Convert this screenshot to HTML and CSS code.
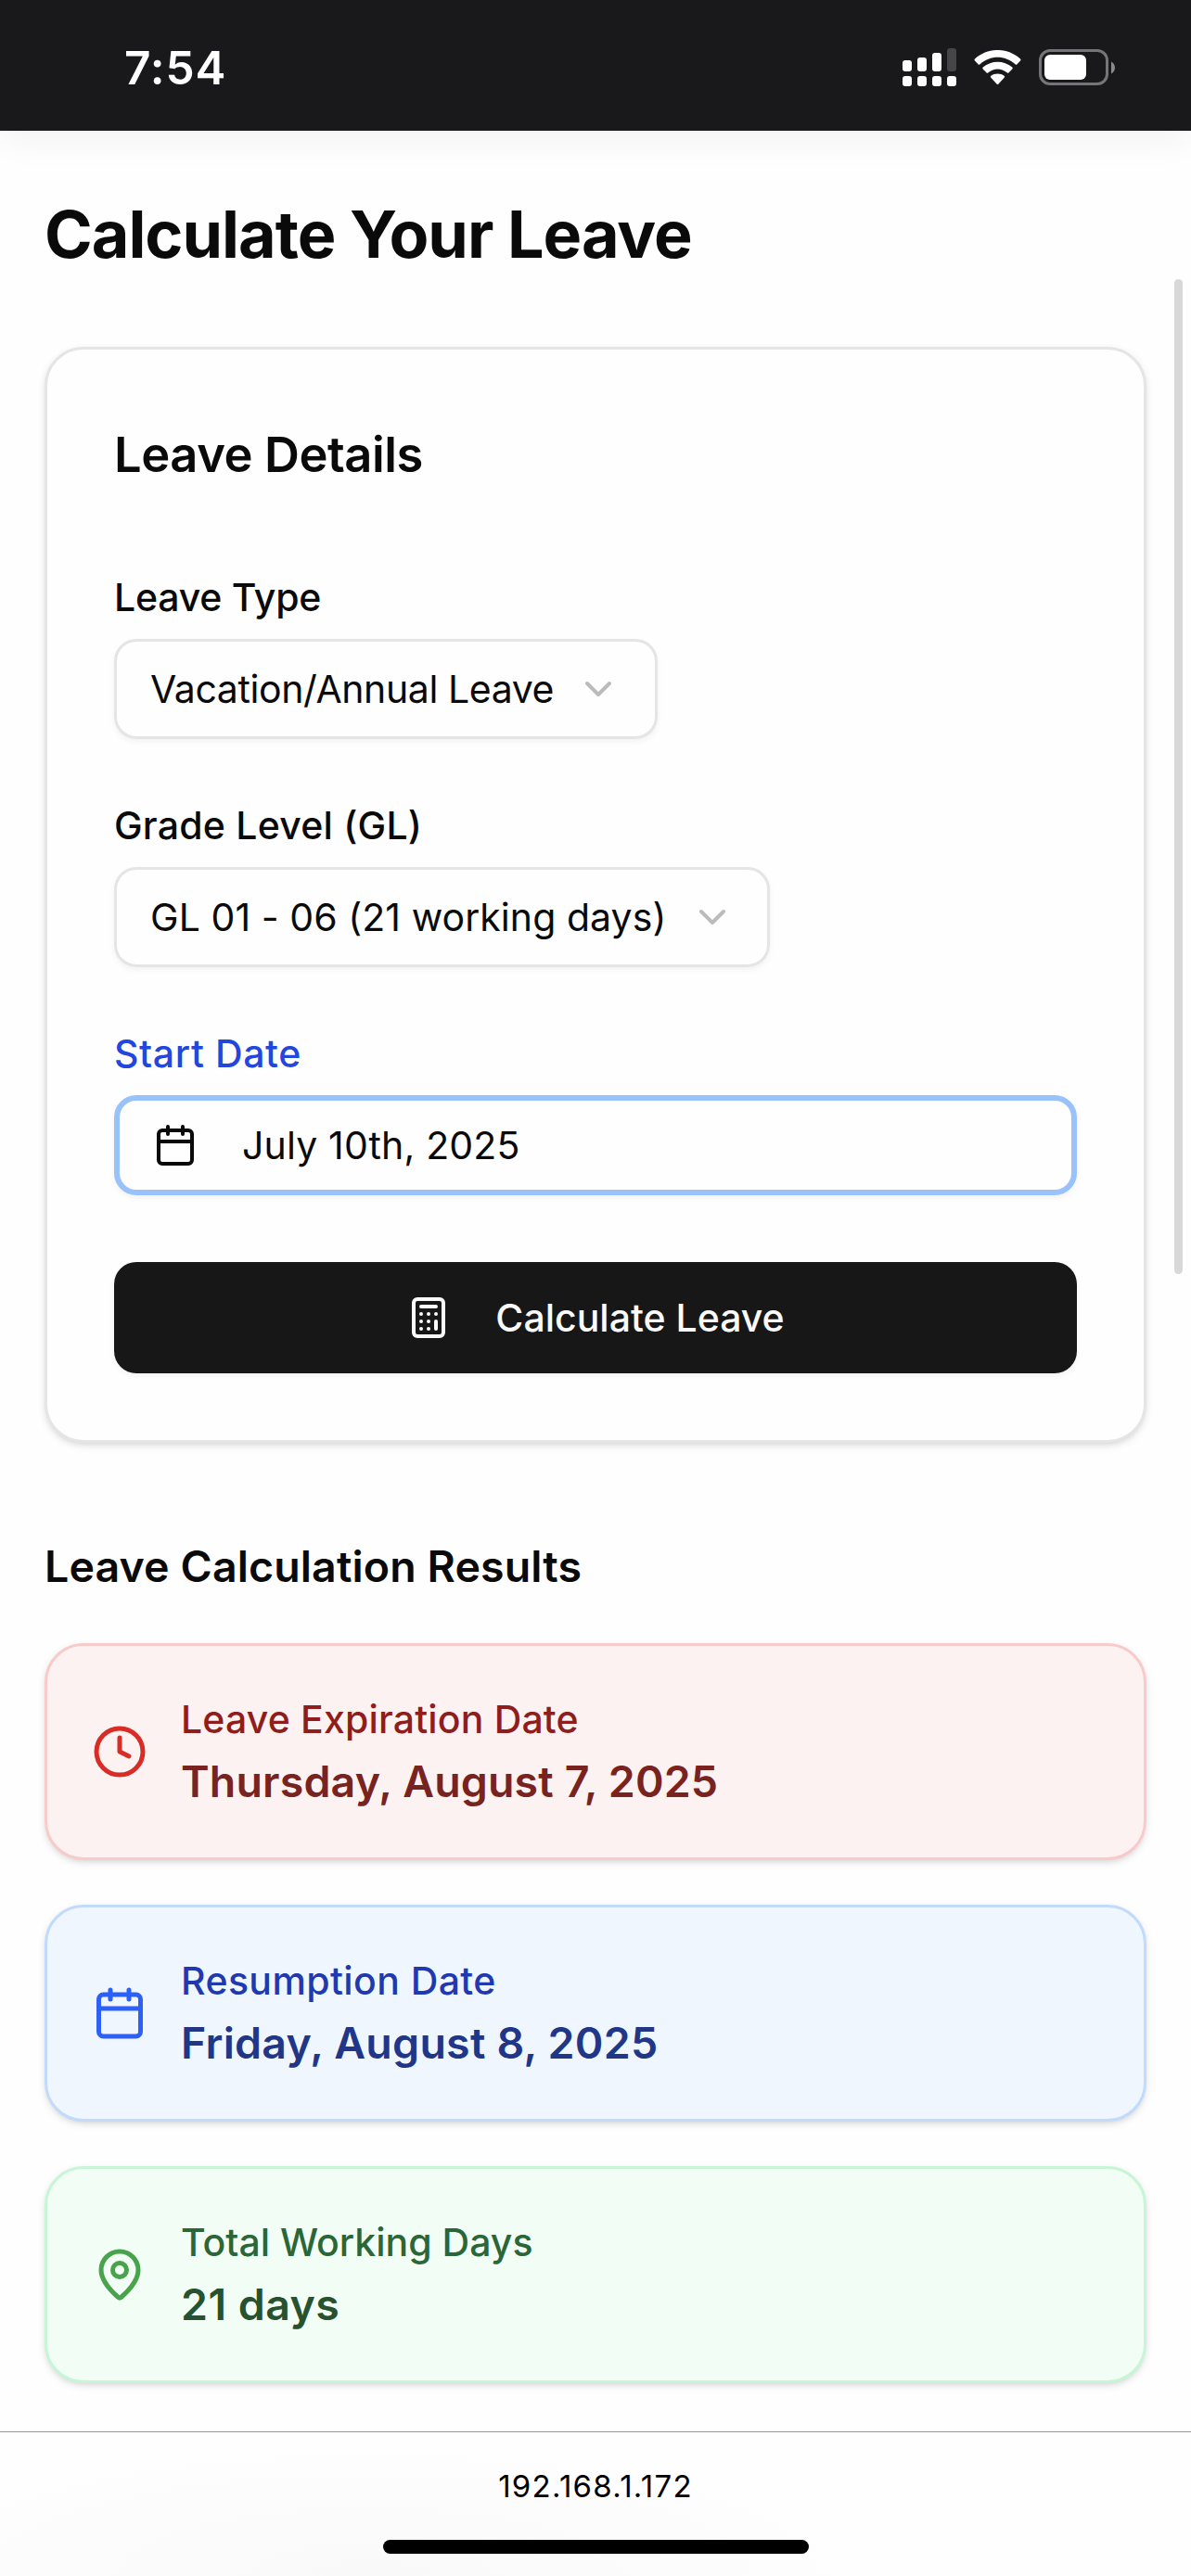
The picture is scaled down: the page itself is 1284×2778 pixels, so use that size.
FILE: index.html
```html
<!DOCTYPE html>
<html lang="en">
<head>
<meta charset="utf-8">
<title>Calculate Your Leave</title>
<link rel="stylesheet" href="styles.css">
</head>
<body>
<div class="screen">
  <header class="status">
    <span class="clock">7:54</span>
    <div class="indicators">
      <svg class="signal" width="58" height="41" viewBox="0 0 58 41" fill="#fff">
        <rect x="0" y="13" width="10" height="12" rx="3"/><rect x="16" y="10" width="10" height="15" rx="3"/><rect x="32" y="5" width="10" height="20" rx="3"/><rect x="48" y="0" width="10" height="25" rx="3" fill="#464648"/>
        <rect x="0" y="30" width="10" height="11" rx="3"/><rect x="16" y="30" width="10" height="11" rx="3"/><rect x="32" y="30" width="10" height="11" rx="3"/><rect x="48" y="30" width="10" height="11" rx="3"/>
      </svg>
      <svg class="wifi" width="51" height="38" viewBox="0 0 51 38" fill="#fff">
        <path d="M1 9.5Q0 10.500 1 11.500L4.500 15.200Q5.500 16.200 6.500 15.200C17.500 5.200 33.500 5.200 44.500 15.200Q45.500 16.200 46.500 15.200L50 11.500Q51 10.500 50 9.500C36 -3.200 15 -3.200 1 9.500Z"/>
        <path d="M9.700 18.500Q8.700 19.500 9.700 20.500L13.400 24.300Q14.400 25.300 15.400 24.300C21.500 19.200 29.500 19.200 35.600 24.300Q36.600 25.300 37.600 24.300L41.300 20.500Q42.300 19.500 41.300 18.500C32 10.700 19 10.700 9.700 18.500Z"/>
        <path d="M18.300 27.700Q17.300 28.700 18.300 29.700L24.500 36.600Q25.500 37.600 26.500 36.600L32.700 29.700Q33.700 28.700 32.700 27.700C28.500 24.700 22.500 24.700 18.300 27.700Z"/>
      </svg>
      <svg class="battery" width="82" height="39" viewBox="0 0 82 39">
        <rect x="1.500" y="1.500" width="72" height="36" rx="10.500" fill="none" stroke="#757577" stroke-width="3"/>
        <rect x="6" y="6" width="45" height="27" rx="6" fill="#fff"/>
        <path d="M78 13.500C83.300 16 83.300 24 78 26.500Z" fill="#8a8a8c"/>
      </svg>
    </div>
  </header>

  <main class="page">
    <h1 class="title">Calculate Your Leave</h1>

    <section class="card">
      <h2 class="card-title">Leave Details</h2>
      <div class="fields">
        <div class="field">
          <label class="label label-type">Leave Type</label>
          <div class="select select-type">
            <span class="type-text">Vacation/Annual Leave</span>
            <svg class="icon chevron" viewBox="0 0 24 24"><path d="m6 9 6 6 6-6"/></svg>
          </div>
        </div>
        <div class="field">
          <label class="label label-grade">Grade Level (GL)</label>
          <div class="select select-grade">
            <span class="grade-text">GL 01 - 06 (21 working days)</span>
            <svg class="icon chevron" viewBox="0 0 24 24"><path d="m6 9 6 6 6-6"/></svg>
          </div>
        </div>
        <div class="field">
          <label class="label label-date">Start Date</label>
          <div class="date">
            <svg class="icon" viewBox="0 0 24 24"><path d="M8 2v4M16 2v4M3 10h18"/><rect x="3" y="4" width="18" height="18" rx="2"/></svg>
            <span class="date-text">July 10th, 2025</span>
          </div>
        </div>
        <button class="submit" type="button">
          <svg class="icon" viewBox="0 0 24 24"><rect x="4" y="2" width="16" height="20" rx="2"/><path d="M8 6h8M16 14v4M16 10h.01M12 10h.01M8 10h.01M12 14h.01M8 14h.01M12 18h.01M8 18h.01"/></svg>
          <span>Calculate Leave</span>
        </button>
      </div>
    </section>

    <h2 class="results-title">Leave Calculation Results</h2>
    <div class="results">
      <article class="result red">
        <svg class="icon large" viewBox="0 0 24 24"><circle cx="12" cy="12" r="10"/><path d="M12 6v6l4 2"/></svg>
        <div><p class="name name-expiry">Leave Expiration Date</p><p class="value">Thursday, August 7, 2025</p></div>
      </article>
      <article class="result blue">
        <svg class="icon large" viewBox="0 0 24 24"><path d="M8 2v4M16 2v4M3 10h18"/><rect x="3" y="4" width="18" height="18" rx="2"/></svg>
        <div><p class="name name-resume">Resumption Date</p><p class="value value-resume">Friday, August 8, 2025</p></div>
      </article>
      <article class="result green">
        <svg class="icon large" viewBox="0 0 24 24"><path d="M20 10c0 4.993-5.539 10.193-7.399 11.799a1 1 0 0 1-1.202 0C9.539 20.193 4 14.993 4 10a8 8 0 0 1 16 0"/><circle cx="12" cy="10" r="3"/></svg>
        <div><p class="name name-total">Total Working Days</p><p class="value value-total">21 days</p></div>
      </article>
    </div>
  </main>

  <footer class="toolbar">
    <span class="address">192.168.1.172</span>
    <div class="home"></div>
  </footer>
  <div class="scrollbar"></div>
</div>
</body>
</html>
```
FILE: styles.css
```css
* { box-sizing: border-box; }
body { margin: 0; background: #fefefe; font-family: Inter, "Liberation Sans", sans-serif; color: #0a0a0a; }
h1, h2, p { margin: 0; }
.screen { position: relative; display: flex; flex-direction: column; width: 1284px; height: 2778px; overflow: hidden; }

.status { flex: none; display: flex; justify-content: space-between; align-items: flex-start; height: 141px; padding: 52px 82px 0 134px; background: #19191b; color: #fff; box-shadow: 0 6px 40px rgba(0, 0, 0, .06); }
.clock { font-size: 49.5px; font-weight: 600; line-height: 42px; letter-spacing: .9px; }
.indicators { display: flex; align-items: flex-start; }
.signal { margin-right: 19px; }
.wifi { margin: 1.500px 19px 0 0; }
.battery { margin-top: 1px; }

.page { flex: none; height: 2481px; padding: 67px 48px 0; }
.title { font-size: 70px; font-weight: 700; line-height: 90px; letter-spacing: -1.01px; }
.card { margin-top: 76px; padding: 72px; height: 1182px; border: 3px solid #e5e5e5; border-radius: 42px; background: #fefefe; box-shadow: 0 3px 9px rgba(0, 0, 0, .1), 0 3px 6px -3px rgba(0, 0, 0, .1); }
.card-title { font-size: 52.5px; font-weight: 600; line-height: 82px; letter-spacing: -.45px; }
.fields { display: flex; flex-direction: column; gap: 72px; margin-top: 92px; }
.field { display: flex; flex-direction: column; gap: 24px; }
.label { font-size: 41px; font-weight: 500; line-height: 42px; }
.label-type { letter-spacing: -.22px; }
.label-grade { letter-spacing: .22px; }
.label-date { letter-spacing: .61px; color: #2347dc; }
.select, .date { display: flex; align-items: center; height: 108px; font-size: 41px; line-height: 60px; white-space: nowrap; border-radius: 24px; box-shadow: 0 3px 6px rgba(0, 0, 0, .05); }
.select { justify-content: space-between; padding: 0 36px; border: 3px solid #e5e5e5; }
.select-type { width: 586px; padding-right: 37px; }
.type-text { letter-spacing: -.4px; }
.select-grade { width: 707px; padding-right: 35px; }
.grade-text { letter-spacing: .06px; }
.date { gap: 48px; padding: 0 36px; border: 6px solid #99c2fb; }
.date-text { letter-spacing: .15px; }
.submit { display: flex; justify-content: center; align-items: center; gap: 48px; height: 120px; padding: 0; border: 0; border-radius: 24px; background: #171717; color: #fafafa; font: 500 41px/60px Inter, "Liberation Sans", sans-serif; letter-spacing: 0; box-shadow: 0 3px 6px rgba(0, 0, 0, .05); }

.icon { flex: none; width: 48px; height: 48px; fill: none; stroke: currentColor; stroke-width: 2; stroke-linecap: round; stroke-linejoin: round; }
.chevron { color: #bbb; }
.large { width: 60px; height: 60px; }

.results-title { margin: 91px 0 41px; font-size: 46.5px; font-weight: 600; line-height: 84px; letter-spacing: .12px; }
.results { display: flex; flex-direction: column; gap: 48px; }
.result { display: flex; align-items: center; gap: 36px; height: 234px; padding: 0 48px; border: 3px solid; border-radius: 42px; box-shadow: 0 3px 9px rgba(0, 0, 0, .1), 0 3px 6px -3px rgba(0, 0, 0, .1); }
.name { font-size: 41px; font-weight: 500; line-height: 63px; }
.name-expiry { letter-spacing: .16px; }
.name-resume { letter-spacing: .4px; }
.name-total { letter-spacing: 0; }
.value { font-size: 46.5px; font-weight: 600; line-height: 70px; letter-spacing: .15px; }
.value-resume { letter-spacing: .24px; }
.value-total { letter-spacing: .44px; }
.red { background: #fcf2f1; border-color: #f8cbca; }
.red .icon { color: #d82d27; }
.red .name { color: #8f1d1c; }
.red .value { color: #792320; }
.blue { background: #eff6fe; border-color: #c2dbfc; }
.blue .icon { color: #2c60f6; }
.blue .name { color: #2139b0; }
.blue .value { color: #223688; }
.green { background: #f2fdf5; border-color: #c6f6d5; }
.green .icon { color: #49a34d; }
.green .name { color: #2a6638; }
.green .value { color: #27522f; }

.toolbar { flex: none; display: flex; flex-direction: column; align-items: center; height: 156px; padding-top: 38px; border-top: 1px solid #999; background: radial-gradient(ellipse 560px 150px at 400px 156px, #f9f9f9, #fefefe); color: #000; }
.address { font-size: 33px; line-height: 40px; letter-spacing: 1.27px; }
.home { width: 459px; height: 15px; margin-top: 38px; border-radius: 8px; background: #000; }
.scrollbar { position: absolute; top: 301px; right: 9px; width: 9px; height: 1073px; border-radius: 5px; background: #d8d8d8; }
```
